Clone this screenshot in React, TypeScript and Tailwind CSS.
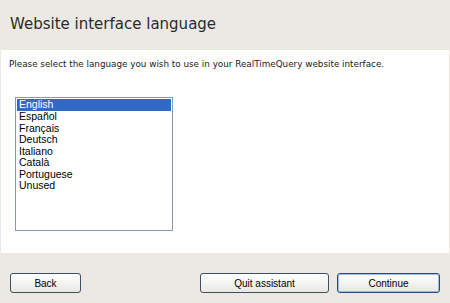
export default function App() {
  const languages = ['English', 'Español', 'Français', 'Deutsch', 'Italiano', 'Català', 'Portuguese', 'Unused']

  return (
    <div className="w-[450px] h-[303px] bg-[#ECE9E4] flex flex-col font-['DejaVu_Sans',sans-serif] overflow-hidden">
      {/* title bar */}
      <div className="h-[50px] pl-[10px] pt-[15px]">
        <h1 className="text-[15px] leading-[18px] text-[#2b2b2b]">Website interface language</h1>
      </div>

      {/* content panel */}
      <div className="mx-[1px] h-[203px] bg-white pt-[9px]">
        <p className="pl-[8px] text-[8.8px] leading-[10px] text-[#1a1a1a]">
          Please select the language you wish to use in your RealTimeQuery website interface.
        </p>
        <div className="ml-[14px] mt-[28px] w-[158px] h-[134px] border border-[#7F9DB9] bg-white p-[1px] font-['Liberation_Sans',sans-serif] text-[10.5px] leading-[11.5px] text-black">
          {languages.map((lang, i) => (
            <div
              key={lang}
              className={i === 0 ? 'bg-[#316AC5] text-white pl-[2px] h-[12px]' : 'pl-[2px] h-[11.5px]'}
            >
              {lang}
            </div>
          ))}
        </div>
      </div>

      {/* footer buttons */}
      <div className="flex items-start pt-[20px] pl-[10px] pr-[10px] font-['Liberation_Sans',sans-serif] text-[10px] text-black">
        <button className="w-[71px] h-[20px] rounded-[3px] border border-[#3d4f63] bg-gradient-to-b from-white to-[#E8E7E1]">
          Back
        </button>
        <div className="flex-1" />
        <button className="w-[129px] h-[20px] rounded-[3px] border border-[#3d4f63] bg-gradient-to-b from-white to-[#E8E7E1]">
          Quit assistant
        </button>
        <button className="ml-[8px] w-[103px] h-[20px] rounded-[3px] border border-[#2a4a78] bg-gradient-to-b from-white to-[#E8E7E1] shadow-[inset_0_0_0_1px_#9DBCEB]">
          Continue
        </button>
      </div>
    </div>
  )
}
